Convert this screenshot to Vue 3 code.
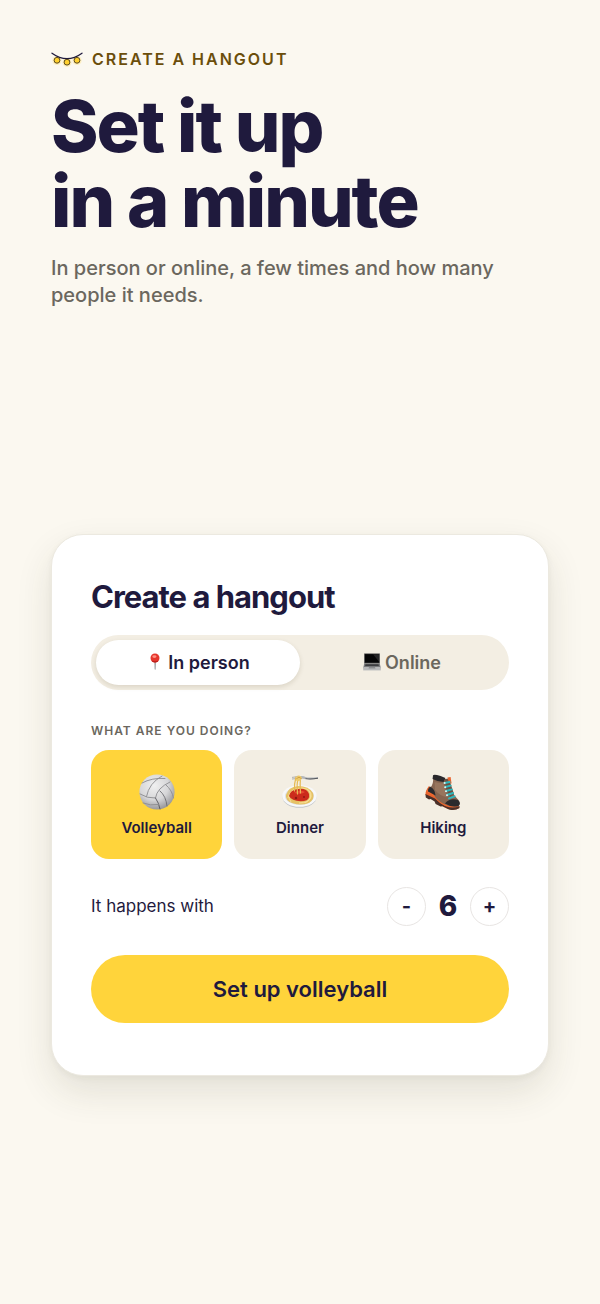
<script setup>
import { ref, computed } from 'vue'

const mode = ref('in-person')
const activity = ref('Volleyball')
const people = ref(6)
const activities = ['Volleyball', 'Dinner', 'Hiking']

const submitLabel = computed(() => 'Set up ' + activity.value.toLowerCase())
const changePeople = (n) => {
  people.value = Math.max(2, people.value + n)
}
</script>

<template>
  <main class="page">
    <header class="intro">
      <div class="eyebrow">
        <svg class="lights" viewBox="0 0 32 16" aria-hidden="true">
          <g class="glow">
            <circle cx="6" cy="9.5" r="4.6" />
            <circle cx="16" cy="11.3" r="4.6" />
            <circle cx="26" cy="9.5" r="4.6" />
          </g>
          <path d="M1 2.2 Q16 13 31 2.2" fill="none" stroke="#1f1a3d" stroke-width="1.3" stroke-linecap="round" />
          <g fill="#ffd02e" stroke="#5a4a1f" stroke-width="1">
            <circle cx="6" cy="9.3" r="2.9" />
            <circle cx="16" cy="11.2" r="2.9" />
            <circle cx="26" cy="9.3" r="2.9" />
          </g>
        </svg>
        <span>Create a hangout</span>
      </div>
      <h1>Set it up<br />in a minute</h1>
      <p class="lead">In person or online, a few times and how many people it needs.</p>
    </header>

    <form class="card" @submit.prevent>
      <h2>Create a hangout</h2>

      <div class="tabs">
        <button type="button" class="tab" :class="{ active: mode === 'in-person' }" @click="mode = 'in-person'">
          <svg class="tab-icon" viewBox="0 0 18 18" aria-hidden="true">
            <path d="M8.5 8h1.2l-.2 8-.4 1-.4-1z" fill="#77777c" />
            <circle cx="9" cy="5" r="4.5" fill="#e5352c" />
            <path d="M5.2 7.4a4.5 4.5 0 0 0 7.6 0Q9 9 5.2 7.4z" fill="#b91f1d" />
            <ellipse cx="8.4" cy="3.6" rx="2.1" ry="1.4" fill="#ff9183" />
          </svg>
          In person
        </button>
        <button type="button" class="tab" :class="{ active: mode === 'online' }" @click="mode = 'online'">
          <svg class="tab-icon" viewBox="0 0 18 18" aria-hidden="true">
            <path d="M1.2.5h15.6v10H1.2z" fill="#3a3a3d" />
            <path d="M2 1.2h14v8.4H2z" fill="#050507" />
            <path d="M10 1.2h6v7.5z" fill="#242426" />
            <path d="M1.2 10.5h15.6l1 4.8H.2z" fill="#77787b" />
            <path d="M2.5 11.2h13l.4 1.9H2.1z" fill="#3c3d40" />
            <path d="M.2 14h17.6v3.4H.2z" fill="#b7b8ba" />
            <path d="M6 14h6l.5 1.5h-7z" fill="#8c8d90" />
          </svg>
          Online
        </button>
      </div>

      <div class="field-label">What are you doing?</div>
      <div class="choices">
        <button
          v-for="a in activities"
          :key="a"
          type="button"
          class="choice"
          :class="{ selected: activity === a }"
          @click="activity = a"
        >
          <svg v-if="a === 'Volleyball'" class="choice-icon" viewBox="0 0 36 36" aria-hidden="true">
            <defs>
              <radialGradient id="ball" cx="42%" cy="32%" r="68%">
                <stop offset="0" stop-color="#f0f0f0" />
                <stop offset="0.6" stop-color="#d6d6d8" />
                <stop offset="1" stop-color="#98989c" />
              </radialGradient>
            </defs>
            <circle cx="18" cy="18" r="17.6" fill="url(#ball)" />
            <g fill="none" stroke="#8c8c90" stroke-width="0.9" stroke-linecap="round">
              <path d="M1 20 Q8 24.5 16.5 24 Q18 14 31 8" />
              <path d="M16.5 24 Q20 29 21 35" stroke="#55555a" />
              <path d="M7.5 22.5 Q10 9 23 2" />
              <path d="M3 9 Q13 3.5 26 4.5" />
              <path d="M21 17 Q27 22 28 32" stroke="#6b6b70" />
              <path d="M27 11 Q33 16 34.5 24" />
              <path d="M4 29 Q11 32 19.5 30.5" />
            </g>
          </svg>

          <svg v-else-if="a === 'Dinner'" class="choice-icon" viewBox="0 0 36 36" aria-hidden="true">
            <ellipse cx="17.5" cy="23" rx="17" ry="10.8" fill="#c3c6ca" />
            <ellipse cx="17.5" cy="22" rx="17.3" ry="10.8" fill="#f7f8fa" />
            <ellipse cx="17.5" cy="22" rx="14.5" ry="9" fill="#dde0e4" />
            <path d="M4 21 Q6 13 16 12 Q27 12 31 19 Q33 25 27 29 Q19 32 10 29 Q3 26 4 21z" fill="#e6c266" />
            <g fill="none" stroke="#f8e19a" stroke-width="0.9">
              <path d="M6 24 Q8 14 20 14 Q30 15 29 23 Q27 29 17 29" />
              <path d="M9 28 Q4 21 12 16" />
              <path d="M23 29 Q32 24 27 17" />
            </g>
            <path d="M7 22 Q8 16 16 15 Q25 14 27 20 Q28 26 22 27 Q10 28 7 22z" fill="#cb2c1c" />
            <path d="M12 19 Q17 15 23 18 Q20 21 12 19z" fill="#e64a30" />
            <circle cx="14" cy="24" r="1.2" fill="#8f1812" />
            <circle cx="22" cy="23" r="1" fill="#8f1812" />
            <path d="M10 3.4 L16 2.6 M10 5 L16 4.4" stroke="#9b9ea4" stroke-width="0.8" />
            <path d="M17 2.4 Q21 1.6 23.5 3 Q27 4.2 36 3 L36 4.8 Q27 6 22.5 5 Q19 4 17 5z" fill="#b4b7bc" />
            <path d="M24 4.2 Q29 4.8 36 3.8 L36 4.8 Q28 6 23 5z" fill="#55585e" />
            <g fill="none" stroke="#e5b953" stroke-width="1.2" stroke-linecap="round">
              <path d="M14 3 Q12 10 12.5 17" />
              <path d="M16 2 Q14.5 11 15.5 20" />
              <path d="M18.5 3 Q17.8 10 18.5 19" />
            </g>
            <path d="M14 4 Q16.5 -.5 19.5 3 Q20.5 6 17 7 Q13 8 14 4z" fill="#efcb68" />
            <path d="M14.5 5 Q17 1.5 19.5 5" fill="none" stroke="#c8963a" stroke-width="0.8" />
          </svg>

          <svg v-else class="choice-icon" viewBox="0 0 36 36" aria-hidden="true">
            <path d="M4 12 Q0 17 .6 21 L10 26 Q15 32 23 35 Q30 37 34.5 34 L33 31 L22 31 L10 19z" fill="#e8632d" />
            <path d="M.4 20 L.8 23.6 L4 25.6 L5.6 25 L9.6 27.6 L10.6 30 L15.6 32.4 L17.6 32.2 L24 35.4 Q30 37 34.4 34 L34.6 32 Q28 35 20 32 Q14 29 10 24.6z" fill="#4a302a" />
            <path d="M1.6 16.6 L10.6 22.6 Q15 29 22 31.6" fill="none" stroke="#ef6a30" stroke-width="1.6" />
            <path d="M8 3 Q14 5 21 5 Q24 11 27 17 Q29 22 33.5 26 Q36 30 33 32 Q26 33.6 19 30 Q12 26.6 9.6 22 L5 14 Q9 10 8 3z" fill="#866550" />
            <path d="M9.6 8 Q15 9.5 18.5 9 L21.5 23 Q15 22 10 16z" fill="#97755d" />
            <path d="M8 1.2 Q9 0 15.6 2 L20.4 4 L18.6 8 Q12 7.6 7.6 5z" fill="#29282b" />
            <path d="M5 12.4 Q10 14.6 10.6 21.6 L3 17.4 Q2.6 14.6 5 12.4z" fill="#2c2b2e" />
            <path d="M20 29.5 Q25 23.6 33 26 Q36.5 29.5 33.5 32 Q27 34 20 29.5z" fill="#2b2a2d" />
            <path d="M20 5 L24.4 4.4 L26 11 L29 20 L25 23 L21 14z" fill="#6a5142" />
            <path d="M22.4 3.4 L25.6 3 L26.6 9.6 L24 9z" fill="#e8632d" />
            <path d="M19.6 9 L24.6 8 M20.2 13 L25.6 11.6 M21 17 L26.8 15.4 M22 21 L28 19 M24 24.4 L29.6 22.4" fill="none" stroke="#2cb8bd" stroke-width="2" stroke-linecap="round" />
            <g fill="#dff2ef">
              <circle cx="19.6" cy="9" r="1" />
              <circle cx="20.2" cy="13.2" r="1" />
              <circle cx="21" cy="17.3" r="1" />
              <circle cx="22" cy="21.3" r="1" />
            </g>
          </svg>
          <span>{{ a }}</span>
        </button>
      </div>

      <div class="people-row">
        <span class="people-label">It happens with</span>
        <div class="stepper">
          <button type="button" aria-label="Fewer people" @click="changePeople(-1)">-</button>
          <output>{{ people }}</output>
          <button type="button" aria-label="More people" @click="changePeople(1)">+</button>
        </div>
      </div>

      <button type="submit" class="submit">{{ submitLabel }}</button>
    </form>
  </main>
</template>

<style>
body {
  background: #fbf8f0;
}
</style>

<style scoped>
.page {
  box-sizing: border-box;
  min-height: 100vh;
  padding: 48px 51px 4px;
  display: flex;
  flex-direction: column;
  background: #fbf8f0;
  color: #1f1a3d;
  font-family: Inter, "Liberation Sans", sans-serif;
}
button {
  font-family: inherit;
  color: inherit;
  border: none;
  padding: 0;
  cursor: pointer;
}
.eyebrow {
  display: flex;
  align-items: center;
  gap: 9px;
  font-size: 16px;
  font-weight: 600;
  line-height: 22px;
  letter-spacing: 2px;
  text-transform: uppercase;
  color: #6b4e0b;
}
.lights {
  width: 32px;
  height: 16px;
}
.glow {
  fill: #ffe9a0;
  opacity: 0.6;
}
h1 {
  margin: 18px 0 0;
  font-size: 72px;
  line-height: 75px;
  font-weight: 800;
  letter-spacing: -2px;
}
.lead {
  margin: 17px 0 0;
  font-size: 20px;
  line-height: 27px;
  font-weight: 500;
  color: #6b675e;
}
.card {
  margin: auto 0;
  padding: 40px 39px 52px;
  border: 1px solid #ece9e0;
  border-radius: 32px;
  background: #fff;
  box-shadow: 0 16px 36px rgba(60, 55, 30, 0.12), 0 2px 6px rgba(60, 55, 30, 0.05);
}
h2 {
  margin: 0;
  font-size: 31px;
  line-height: 44px;
  font-weight: 700;
  letter-spacing: -1px;
}
.tabs {
  display: flex;
  margin-top: 16px;
  padding: 5px;
  border-radius: 28px;
  background: #f3eee3;
}
.tab {
  flex: 1;
  display: flex;
  align-items: center;
  justify-content: center;
  gap: 4px;
  height: 45px;
  border-radius: 23px;
  background: transparent;
  font-size: 18px;
  font-weight: 600;
  color: #6b675e;
}
.tab.active {
  background: #fff;
  color: #1f1a3d;
  box-shadow: 0 2px 5px rgba(70, 60, 20, 0.14);
}
.tab-icon {
  width: 18px;
  height: 18px;
}
.field-label {
  margin-top: 32px;
  font-size: 12px;
  line-height: 18px;
  font-weight: 600;
  letter-spacing: 1px;
  text-transform: uppercase;
  color: #6b675e;
}
.choices {
  display: grid;
  grid-template-columns: repeat(3, 1fr);
  gap: 12px;
  margin-top: 10px;
}
.choice {
  display: flex;
  flex-direction: column;
  align-items: center;
  gap: 8px;
  padding: 24px 0 22px;
  border-radius: 18px;
  background: #f3eee3;
  font-size: 15px;
  line-height: 19px;
  font-weight: 600;
}
.choice.selected {
  background: #ffd43b;
}
.choice-icon {
  width: 36px;
  height: 36px;
}
.people-row {
  display: flex;
  align-items: center;
  justify-content: space-between;
  margin-top: 28px;
}
.people-label {
  font-size: 17px;
}
.stepper {
  display: flex;
  align-items: center;
  gap: 12px;
}
.stepper button {
  width: 39px;
  height: 39px;
  border: 1px solid #e8e5e3;
  border-radius: 50%;
  background: #fff;
  font-size: 20px;
  font-weight: 700;
}
.stepper output {
  min-width: 20px;
  font-size: 28px;
  line-height: 36px;
  font-weight: 800;
  text-align: center;
}
.submit {
  display: block;
  width: 100%;
  margin-top: 29px;
  padding: 18px;
  border-radius: 34px;
  background: #ffd43b;
  font-size: 22px;
  line-height: 32px;
  font-weight: 600;
}
</style>
